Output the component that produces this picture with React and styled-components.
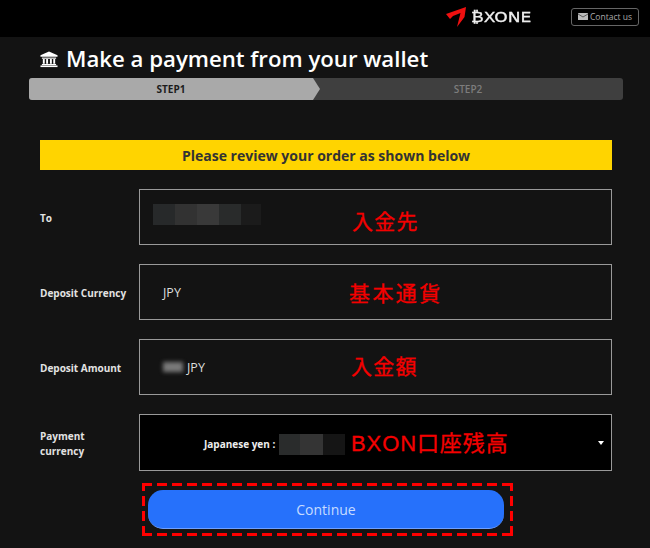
import React from "react";
import styled, { createGlobalStyle } from "styled-components";

const Global = createGlobalStyle`
  html, body { margin: 0; padding: 0; background: #131313; }
  body { font-family: "Open Sans", "Noto Sans", sans-serif; width: 650px; height: 548px; overflow: hidden; }
  * { box-sizing: border-box; }
`;

const Header = styled.header`
  height: 37px;
  background: #000;
  display: flex;
  align-items: center;
  justify-content: flex-end;
  padding: 0 11px 4px 0;
`;

const Logo = styled.div`
  display: flex;
  align-items: center;
  gap: 5px;
  margin-right: 40px;
`;

const LogoText = styled.span`
  font-family: "DejaVu Sans", sans-serif;
  font-size: 14px;
  color: #eee;
  -webkit-text-stroke: 0.3px #eee;
  white-space: nowrap;
  transform: scaleX(1.22);
  transform-origin: left center;
  width: 60px;
`;

const ContactButton = styled.div`
  width: 68px;
  height: 18px;
  border: 1px solid #666;
  border-radius: 3px;
  display: flex;
  align-items: center;
  justify-content: center;
  gap: 2px;
  font-size: 8.5px;
  color: #aaa;
`;

const Main = styled.main`
  padding: 0 27px 0 29px;
`;

const Title = styled.h1`
  margin: 8px 0 0 11px;
  height: 33px;
  padding-bottom: 5px;
  display: flex;
  align-items: center;
  gap: 8px;
  font-size: 22.2px;
  font-weight: 600;
  line-height: 28px;
  color: #fff;
`;

const Stepper = styled.div`
  display: flex;
  height: 22px;
  background: #3f3f3f;
  border-radius: 3px;
  overflow: hidden;
`;

const Step = styled.div`
  position: relative;
  width: ${(p) => p.$width}px;
  flex: ${(p) => (p.$active ? "none" : 1)};
  background: ${(p) => (p.$active ? "#a9a9a9" : "transparent")};
  color: ${(p) => (p.$active ? "#1c1c1c" : "#7d7d7d")};
  font-size: 10px;
  font-weight: ${(p) => (p.$active ? 700 : 600)};
  display: flex;
  align-items: center;
  justify-content: center;
  ${(p) =>
    p.$active &&
    `&::after {
      content: "";
      position: absolute;
      left: 100%;
      top: 0;
      width: 7px;
      height: 22px;
      background: #a9a9a9;
      clip-path: polygon(0 0, 100% 50%, 0 100%);
    }`}
`;

const Form = styled.section`
  margin: 40px 11px 0;
  display: flex;
  flex-direction: column;
`;

const Banner = styled.div`
  height: 30px;
  background: #ffd400;
  color: #333;
  font-size: 14px;
  font-weight: 700;
  display: flex;
  align-items: center;
  justify-content: center;
  margin-bottom: 19px;
`;

const Row = styled.div`
  display: flex;
  align-items: center;
  margin-bottom: 19px;
`;

const Label = styled.div`
  width: 99px;
  padding-top: 2px;
  font-size: 10px;
  font-weight: 700;
  line-height: 15px;
  color: #e2e2e2;
`;

const Field = styled.div`
  position: relative;
  width: 473px;
  height: ${(p) => p.$height || 56}px;
  border: 1px solid #999;
  background: ${(p) => (p.$dark ? "#000" : "transparent")};
  display: flex;
  align-items: center;
  padding-left: ${(p) => p.$pad || 23}px;
  color: #ddd;
  font-size: 12.5px;
`;

const Mosaic = styled.div`
  display: flex;
  height: ${(p) => p.$height}px;
  margin-top: ${(p) => p.$top || 0}px;
`;

const Tile = styled.span`
  display: block;
  width: ${(p) => p.$width}px;
  background: ${(p) => p.$color};
`;

const Smudge = styled.span`
  width: 20px;
  height: 10px;
  margin-right: 4px;
  background: #7a7a7a;
  filter: blur(2px);
`;

const Note = styled.span`
  position: absolute;
  left: ${(p) => p.$left}px;
  top: ${(p) => p.$top}px;
  font-family: "Liberation Sans", "Noto Sans CJK JP", sans-serif;
  font-size: ${(p) => p.$size || 21}px;
  font-weight: 400;
  line-height: 28px;
  letter-spacing: ${(p) => p.$spacing || 1.3}px;
  color: #f40000;
  -webkit-text-stroke: 0.3px #f40000;
  white-space: nowrap;
`;

const SelectText = styled.span`
  font-size: 10px;
  font-weight: 700;
  color: #eee;
  margin: 2px 4px 0 0;
`;

const Caret = styled.span`
  position: absolute;
  right: 7px;
  top: 26px;
  width: 0;
  height: 0;
  border-left: 3.5px solid transparent;
  border-right: 3.5px solid transparent;
  border-top: 4px solid #fff;
`;

const Actions = styled.div`
  width: 371px;
  height: 53px;
  margin: -7px 0 0 102px;
  padding: 7px 9px 7px 6px;
  background-image:
    repeating-linear-gradient(90deg, #f00 0 10px, transparent 10px 15px),
    repeating-linear-gradient(90deg, #f00 0 10px, transparent 10px 15px),
    repeating-linear-gradient(0deg, #f00 0 10px, transparent 10px 15px),
    repeating-linear-gradient(0deg, #f00 0 10px, transparent 10px 15px);
  background-size: 100% 3px, 100% 3px, 3px 100%, 3px 100%;
  background-position: 0 0, 0 100%, 0 0, 100% 0;
  background-repeat: no-repeat;
`;

const ContinueButton = styled.button`
  width: 100%;
  height: 39px;
  border: 0;
  border-bottom: 1px solid #6fa0ff;
  border-radius: 15px;
  background: #2671fb;
  color: #c7dcff;
  font-family: inherit;
  font-size: 14px;
  padding: 0;
`;

const BankIcon = () => (
  <svg width="18" height="17" viewBox="0 0 19 17" fill="#fff">
    <path d="M9.5 0 L18.5 4 V5.5 H0.5 V4 Z" />
    <rect x="2" y="6.5" width="15" height="1.2" />
    <rect x="3" y="8" width="2" height="5" />
    <rect x="6.5" y="8" width="2" height="5" />
    <rect x="10.5" y="8" width="2" height="5" />
    <rect x="14" y="8" width="2" height="5" />
    <rect x="2" y="13.2" width="15" height="1.2" />
    <rect x="0.5" y="14.8" width="18" height="1.7" />
  </svg>
);

const LogoMark = () => (
  <svg width="20" height="20" viewBox="0 0 20 20">
    <path d="M0 7 L20 0 L18.5 10 L11 20 L13 12 L14.5 6 L7 9 L4 12 Z" fill="#f01010" />
  </svg>
);

const MailIcon = () => (
  <svg width="10" height="7" viewBox="0 0 10 7">
    <rect width="10" height="7" rx="0.5" fill="#bbb" />
    <path d="M0 1 L5 4 L10 1" fill="none" stroke="#333" strokeWidth="0.7" />
  </svg>
);

const App = () => (
  <>
    <Global />
    <Header>
      <Logo>
        <LogoMark />
        <LogoText>₿XONE</LogoText>
      </Logo>
      <ContactButton>
        <MailIcon />
        Contact us
      </ContactButton>
    </Header>
    <Main>
      <Title>
        <BankIcon />
        Make a payment from your wallet
      </Title>
      <Stepper>
        <Step $active $width={284}>STEP1</Step>
        <Step>STEP2</Step>
      </Stepper>
      <Form>
        <Banner>Please review your order as shown below</Banner>
        <Row>
          <Label>To</Label>
          <Field $pad={13}>
            <Mosaic $height={21} $top={-5}>
              <Tile $width={22} $color="#27292a" />
              <Tile $width={22} $color="#323232" />
              <Tile $width={22} $color="#393939" />
              <Tile $width={22} $color="#292b2b" />
              <Tile $width={20} $color="#1b1b1b" />
            </Mosaic>
            <Note $left={212} $top={18}>入金先</Note>
          </Field>
        </Row>
        <Row>
          <Label>Deposit Currency</Label>
          <Field>
            JPY
            <Note $left={209} $top={15} $spacing={2.4}>基本通貨</Note>
          </Field>
        </Row>
        <Row>
          <Label>Deposit Amount</Label>
          <Field>
            <Smudge />
            JPY
            <Note $left={211} $top={13}>入金額</Note>
          </Field>
        </Row>
        <Row>
          <Label>Payment<br />currency</Label>
          <Field $dark $height={57} $pad={64}>
            <SelectText>Japanese yen :</SelectText>
            <Mosaic $height={21} $top={3}>
              <Tile $width={21} $color="#2a2c2c" />
              <Tile $width={23} $color="#343434" />
              <Tile $width={22} $color="#151515" />
            </Mosaic>
            <Note $left={211} $top={15} $size={22} $spacing={0.9}>BXON口座残高</Note>
            <Caret />
          </Field>
        </Row>
        <Actions>
          <ContinueButton>Continue</ContinueButton>
        </Actions>
      </Form>
    </Main>
  </>
);

export default App;
